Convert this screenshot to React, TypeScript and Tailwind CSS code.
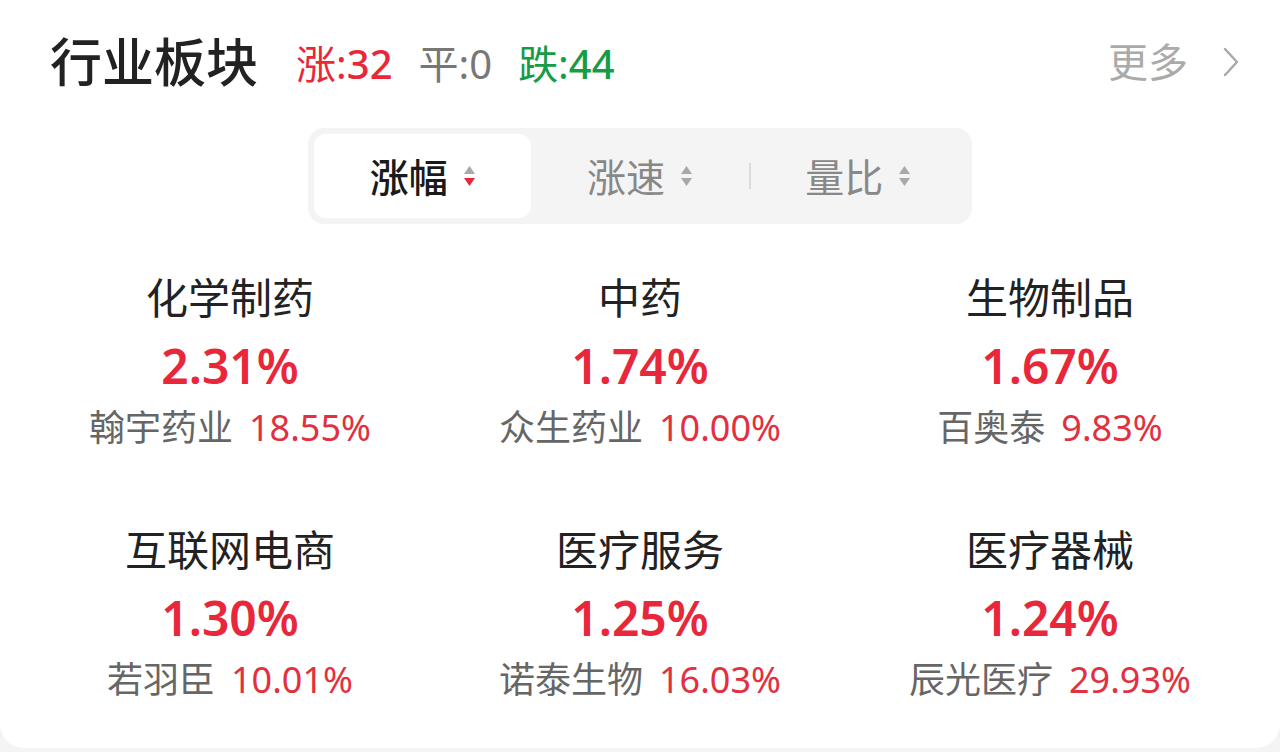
const font = "font-['Noto_Sans','Noto_Sans_CJK_SC',sans-serif]";

const SECTORS = [
  { name: '化学制药', pct: '2.31%', lead: '翰宇药业', leadPct: '18.55%' },
  { name: '中药', pct: '1.74%', lead: '众生药业', leadPct: '10.00%' },
  { name: '生物制品', pct: '1.67%', lead: '百奥泰', leadPct: '9.83%' },
  { name: '互联网电商', pct: '1.30%', lead: '若羽臣', leadPct: '10.01%' },
  { name: '医疗服务', pct: '1.25%', lead: '诺泰生物', leadPct: '16.03%' },
  { name: '医疗器械', pct: '1.24%', lead: '辰光医疗', leadPct: '29.93%' },
];

function SortIcon({ active }: { active?: boolean }) {
  return (
    <svg width="13" height="26" viewBox="0 0 13 26" aria-hidden="true">
      <path d="M6.5 3 L12 11 L1 11 Z" fill="#a8a8a8" />
      <path d="M6.5 23 L12 15 L1 15 Z" fill={active ? '#e8283a' : '#a8a8a8'} />
    </svg>
  );
}

const TABS = [
  { label: '涨幅', active: true },
  { label: '涨速', active: false },
  { label: '量比', active: false },
];

export default function App() {
  return (
    <div className={`${font} min-h-[752px] w-[1280px] bg-[#f4f4f4]`}>
      <div className="h-[748px] rounded-b-[24px] bg-white">
        {/* header */}
        <div className="flex h-[124px] items-center pl-[50px] pr-[40px]">
          <span className="text-[52px] leading-none font-medium text-[#222]">
            行业板块
          </span>
          <div className="ml-[38px] mt-[4px] flex items-center gap-[26px] text-[40px] leading-none">
            <span className="text-[#e8283a]">
              涨:<span className="font-medium">32</span>
            </span>
            <span className="text-[#777]">平:0</span>
            <span className="text-[#169c45]">
              跌:<span className="font-medium">44</span>
            </span>
          </div>
          <div className="ml-auto flex items-center gap-[34px] text-[#aaa]">
            <span className="text-[40px] leading-none">更多</span>
            <svg width="18" height="32" viewBox="0 0 18 32" aria-hidden="true">
              <path
                d="M3 3 L15 16 L3 29"
                fill="none"
                stroke="#aaa"
                strokeWidth="2.5"
                strokeLinecap="round"
                strokeLinejoin="round"
              />
            </svg>
          </div>
        </div>

        {/* sort tabs */}
        <div className="mt-[4px] flex justify-center">
          <div className="flex w-[664px] rounded-[16px] bg-[#f4f4f4] p-[6px]">
            {TABS.map((t, i) => (
              <div key={t.label} className="flex flex-1 items-center">
                {i === 2 && <div className="h-[26px] w-[2px] bg-[#dcdcdc]" />}
                <div
                  className={`flex h-[84px] flex-1 items-center justify-center gap-[15px] rounded-[12px] ${
                    t.active ? 'bg-white text-[#1a1a1a] font-medium' : 'text-[#888]'
                  }`}
                >
                  <span className="text-[39px] leading-none">{t.label}</span>
                  <SortIcon active={t.active} />
                </div>
              </div>
            ))}
          </div>
        </div>

        {/* sector grid */}
        <div className="mt-[49px] grid grid-cols-3 gap-y-[75px] px-[25px]">
          {SECTORS.map(s => (
            <div key={s.name} className="flex flex-col items-center">
              <div className="h-[50px] text-[42px] leading-[50px] text-[#222]">
                {s.name}
              </div>
              <div className="mt-[13px] h-[60px] text-[48px] leading-[60px] font-semibold text-[#e8283a]">
                {s.pct}
              </div>
              <div className="mt-[10px] flex h-[44px] items-center leading-[44px]">
                <span className="text-[36px] text-[#666]">{s.lead}</span>
                <span className="ml-[16px] text-[36px] text-[#e2303f]">
                  {s.leadPct}
                </span>
              </div>
            </div>
          ))}
        </div>
      </div>
    </div>
  );
}
